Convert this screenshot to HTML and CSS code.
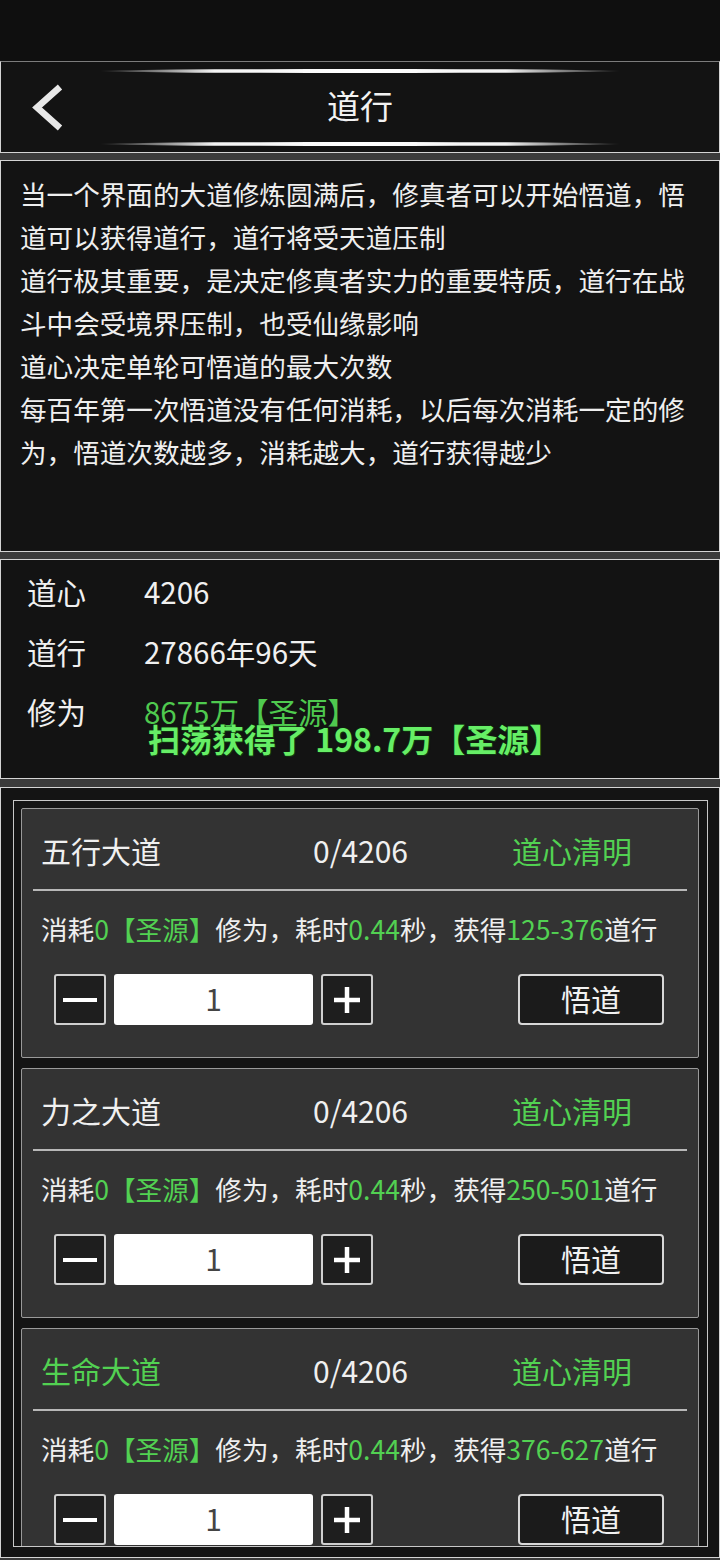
FILE: index.html
```html
<!DOCTYPE html>
<html lang="zh-CN">
<head>
<meta charset="utf-8">
<title>道行</title>
<link rel="stylesheet" href="styles.css">
</head>
<body>
<div class="statusbar"></div>

<header class="header">
  <div class="deco"></div>
  <div class="header-row">
    <div class="back">
      <svg width="40" height="56" viewBox="26 79 40 56"><path d="M59 86 L36 106.5 L59 127" fill="none" stroke="#e8e8e8" stroke-width="6.5" stroke-linejoin="miter"/></svg>
    </div>
    <div class="title">道行</div>
    <div></div>
  </div>
  <div class="deco deco-bottom"></div>
</header>

<section class="desc">
  <p>当一个界面的大道修炼圆满后，修真者可以开始悟道，悟道可以获得道行，道行将受天道压制</p>
  <p>道行极其重要，是决定修真者实力的重要特质，道行在战斗中会受境界压制，也受仙缘影响</p>
  <p>道心决定单轮可悟道的最大次数</p>
  <p>每百年第一次悟道没有任何消耗，以后每次消耗一定的修为，悟道次数越多，消耗越大，道行获得越少</p>
</section>

<section class="stats">
  <div class="stat-row"><span class="label">道心</span><span class="value">4206</span></div>
  <div class="stat-row"><span class="label">道行</span><span class="value">27866年96天</span></div>
  <div class="stat-row"><span class="label">修为</span><span class="value green">8675万【圣源】</span></div>
  <div class="toast">扫荡获得了 198.7万【圣源】</div>
</section>

<section class="list">
  <div class="frame">
    <div class="card">
      <div class="card-head"><span>五行大道</span><span>0/4206</span><span class="green">道心清明</span></div>
      <div class="divider"></div>
      <div class="card-desc">消耗<span class="green">0【圣源】</span>修为，耗时<span class="green">0.44</span>秒，获得<span class="green">125-376</span>道行</div>
      <div class="controls">
        <div class="sq"><span class="minus"></span></div>
        <div class="num">1</div>
        <div class="sq"><svg width="28" height="28" viewBox="0 0 28 28"><path d="M14 1 V27 M1 14 H27" stroke="#fff" stroke-width="4.5"/></svg></div>
        <div class="btn">悟道</div>
      </div>
    </div>
    <div class="card">
      <div class="card-head"><span>力之大道</span><span>0/4206</span><span class="green">道心清明</span></div>
      <div class="divider"></div>
      <div class="card-desc">消耗<span class="green">0【圣源】</span>修为，耗时<span class="green">0.44</span>秒，获得<span class="green">250-501</span>道行</div>
      <div class="controls">
        <div class="sq"><span class="minus"></span></div>
        <div class="num">1</div>
        <div class="sq"><svg width="28" height="28" viewBox="0 0 28 28"><path d="M14 1 V27 M1 14 H27" stroke="#fff" stroke-width="4.5"/></svg></div>
        <div class="btn">悟道</div>
      </div>
    </div>
    <div class="card">
      <div class="card-head"><span class="green">生命大道</span><span>0/4206</span><span class="green">道心清明</span></div>
      <div class="divider"></div>
      <div class="card-desc">消耗<span class="green">0【圣源】</span>修为，耗时<span class="green">0.44</span>秒，获得<span class="green">376-627</span>道行</div>
      <div class="controls">
        <div class="sq"><span class="minus"></span></div>
        <div class="num">1</div>
        <div class="sq"><svg width="28" height="28" viewBox="0 0 28 28"><path d="M14 1 V27 M1 14 H27" stroke="#fff" stroke-width="4.5"/></svg></div>
        <div class="btn">悟道</div>
      </div>
    </div>
  </div>
</section>
</body>
</html>
```
FILE: styles.css
```css
* { box-sizing: border-box; margin: 0; padding: 0; }
html, body { width: 720px; height: 1560px; }
body {
  background: #3b3b3b;
  font-family: "Noto Sans CJK SC", "Noto Sans", sans-serif;
  color: #eeeeee;
  overflow: hidden;
  display: flex;
  flex-direction: column;
}
.green { color: #52d152; }

.statusbar { height: 61px; background: #0f0f0f; flex: none; }

.header {
  flex: none;
  height: 92px;
  border: 1px solid #d4d4d4;
  border-top-color: #7c7c7c;
  background: #131313;
  display: flex;
  flex-direction: column;
  align-items: center;
}
.deco {
  width: 520px;
  height: 4px;
  margin-top: 7px;
  border-radius: 50%;
  background: linear-gradient(to right, rgba(255,255,255,0) 0%, rgba(255,255,255,0.35) 8%, #f4f4f4 22%, #ffffff 50%, #f4f4f4 78%, rgba(255,255,255,0.35) 92%, rgba(255,255,255,0) 100%);
}
.deco-bottom { margin-top: 0; margin-bottom: 6px; }
.header-row {
  align-self: stretch;
  flex: 1;
  display: grid;
  grid-template-columns: 1fr auto 1fr;
  align-items: center;
}
.back { padding-left: 26px; display: flex; align-items: center; }
.title { font-size: 33px; color: #f2f2f2; line-height: 1; margin-bottom: 5px; }

.desc {
  flex: none;
  margin-top: 7px;
  height: 392px;
  border: 1px solid #d4d4d4;
  background: #131313;
  padding: 11px 30px 0 19px;
  font-size: 26.6px;
  line-height: 43px;
  color: #efefef;
}

.stats {
  flex: none;
  position: relative;
  margin-top: 7px;
  height: 220px;
  border: 1px solid #d4d4d4;
  background: #131313;
  padding: 1px 0 0 26px;
}
.stat-row {
  display: grid;
  grid-template-columns: 117px 1fr;
  height: 60px;
  line-height: 60px;
  font-size: 29.5px;
  color: #f0f0f0;
}
.stat-row .green { color: #4fc94f; }
.toast {
  position: absolute;
  left: 147px;
  top: 158px;
  line-height: 40px;
  font-size: 32px;
  font-weight: bold;
  color: #66ee66;
  text-shadow: 0 0 2px #0a3a0a, 1px 1px 0 #123312;
  white-space: nowrap;
}

.list {
  flex: none;
  margin-top: 8px;
  height: 771px;
  border: 1px solid #d4d4d4;
  background: #141414;
  padding: 12px 11px 10px 12px;
  display: flex;
  flex-direction: column;
}
.frame {
  flex: 1;
  border: 1px solid #c8c8c8;
  overflow: hidden;
  padding: 7px 8px 0 7px;
  display: flex;
  flex-direction: column;
  gap: 10px;
}
.card {
  flex-shrink: 0;
  border: 1px solid #9a9a9a;
  border-radius: 2px;
  background: #333333;
  padding-bottom: 32px;
}
.card-head {
  margin-top: 11px;
  height: 60px;
  line-height: 60px;
  padding-left: 19px;
  display: grid;
  grid-template-columns: 272px 199px 1fr;
  font-size: 30px;
  color: #f0f0f0;
}
.divider {
  margin: 9px 11px 0;
  height: 2px;
  background: #b8b8b8;
}
.card-desc {
  margin-top: 18px;
  line-height: 40px;
  padding-left: 19px;
  font-size: 26.6px;
  color: #efefef;
  white-space: nowrap;
}
.controls {
  margin-top: 25px;
  height: 51px;
  display: flex;
  align-items: stretch;
  padding: 0 34px 0 32px;
}
.sq {
  width: 52px;
  border: 2px solid #cfcfcf;
  border-radius: 3px;
  background: #1e1e1e;
  display: flex;
  align-items: center;
  justify-content: center;
}
.minus { width: 34px; height: 4px; background: #ffffff; }
.num {
  width: 199px;
  margin: 0 8px;
  background: #ffffff;
  border-radius: 3px;
  color: #444444;
  font-size: 30px;
  padding-bottom: 4px;
  display: flex;
  align-items: center;
  justify-content: center;
}
.btn {
  margin-left: auto;
  width: 146px;
  border: 2px solid #d8d8d8;
  border-radius: 4px;
  background: #1b1b1b;
  color: #f2f2f2;
  font-size: 30px;
  padding-bottom: 4px;
  display: flex;
  align-items: center;
  justify-content: center;
}
```
